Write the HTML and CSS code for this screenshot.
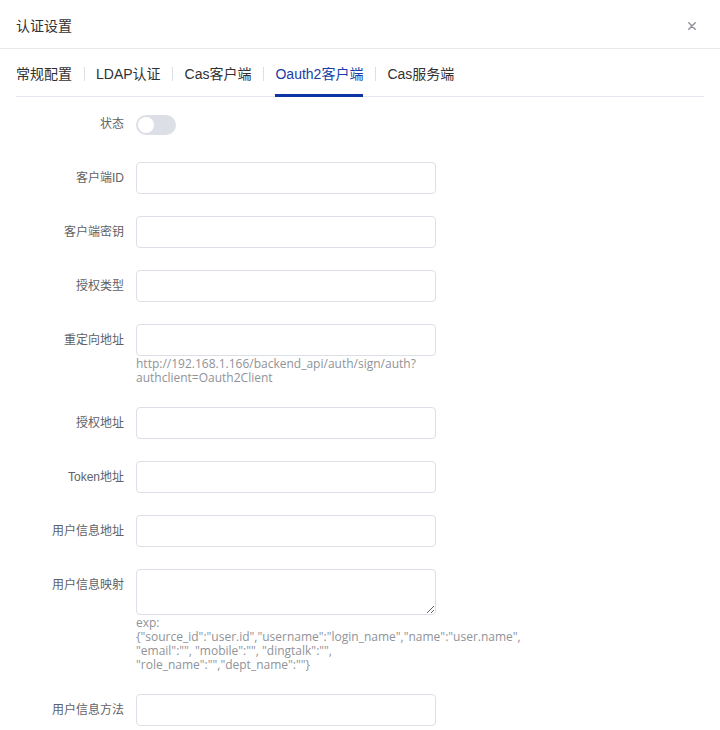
FILE: index.html
```html
<!DOCTYPE html>
<html lang="zh-CN">
<head>
<meta charset="utf-8">
<title>认证设置</title>
<link rel="stylesheet" href="styles.css">
</head>
<body>
<div class="dialog">
  <header class="dlg-header">
    <span class="dlg-title">认证设置</span>
    <button class="dlg-close" type="button" aria-label="关闭">
      <svg width="8" height="8" viewBox="0 0 8 8"><path d="M0.8 0.8L7.2 7.2M7.2 0.8L0.8 7.2" stroke="#909399" stroke-width="1.5" stroke-linecap="round" fill="none"/></svg>
    </button>
  </header>
  <div class="dlg-body">
    <nav class="tabs">
      <span class="tab">常规配置</span><span class="tab-sep"></span>
      <span class="tab">LDAP认证</span><span class="tab-sep"></span>
      <span class="tab">Cas客户端</span><span class="tab-sep"></span>
      <span class="tab active">Oauth2客户端</span><span class="tab-sep"></span>
      <span class="tab">Cas服务端</span>
    </nav>
    <form class="form">
      <div class="form-item">
        <label class="form-label">状态</label>
        <div class="form-content"><span class="switch"><span class="switch-knob"></span></span></div>
      </div>
      <div class="form-item">
        <label class="form-label">客户端ID</label>
        <div class="form-content"><input class="input" type="text"></div>
      </div>
      <div class="form-item">
        <label class="form-label">客户端密钥</label>
        <div class="form-content"><input class="input" type="text"></div>
      </div>
      <div class="form-item">
        <label class="form-label">授权类型</label>
        <div class="form-content"><input class="input" type="text"></div>
      </div>
      <div class="form-item">
        <label class="form-label">重定向地址</label>
        <div class="form-content">
          <input class="input" type="text">
          <div class="help">http://192.168.1.166/backend_api/auth/sign/auth?<br>authclient=Oauth2Client</div>
        </div>
      </div>
      <div class="form-item">
        <label class="form-label">授权地址</label>
        <div class="form-content"><input class="input" type="text"></div>
      </div>
      <div class="form-item">
        <label class="form-label">Token地址</label>
        <div class="form-content"><input class="input" type="text"></div>
      </div>
      <div class="form-item">
        <label class="form-label">用户信息地址</label>
        <div class="form-content"><input class="input" type="text"></div>
      </div>
      <div class="form-item">
        <label class="form-label">用户信息映射</label>
        <div class="form-content">
          <textarea class="textarea"></textarea>
          <div class="help">exp:<br>{"source_id":"user.id","username":"login_name","name":"user.name",<br>"email":"", "mobile":"", "dingtalk":"",<br>"role_name":"","dept_name":""}</div>
        </div>
      </div>
      <div class="form-item">
        <label class="form-label">用户信息方法</label>
        <div class="form-content"><input class="input" type="text"></div>
      </div>
    </form>
  </div>
</div>
</body>
</html>
```
FILE: styles.css
```css
html, body {
  margin: 0;
  padding: 0;
  background: #ffffff;
}
body {
  font-family: "Liberation Sans", "Noto Sans CJK SC", sans-serif;
  color: #303133;
}
.dialog {
  width: 720px;
  height: 730px;
  overflow: hidden;
  background: #fff;
}
.dlg-header {
  display: flex;
  align-items: center;
  justify-content: space-between;
  box-sizing: border-box;
  height: 49px;
  padding: 4px 24px 0 16px;
  border-bottom: 1px solid #e8eaee;
}
.dlg-title {
  font-size: 14px;
  line-height: 16px;
  color: #303133;
}
.dlg-close {
  border: 0;
  background: none;
  padding: 0;
  width: 8px;
  height: 8px;
  display: flex;
  cursor: pointer;
}
.dlg-body {
  padding: 0 16px;
}
.tabs {
  display: flex;
  align-items: center;
  padding: 14px 0 11px;
  border-bottom: 1px solid #e4e7ed;
}
.tab {
  position: relative;
  font-size: 14px;
  line-height: 22px;
  color: #303133;
  white-space: nowrap;
}
.tab.active {
  color: #1a3da6;
}
.tab.active::after {
  content: "";
  position: absolute;
  left: 0;
  right: 0;
  bottom: -12px;
  height: 3px;
  background: #0b34a5;
}
.tab-sep {
  width: 1px;
  height: 14px;
  background: #dcdfe6;
  margin: 0 11.5px;
}
.form {
  margin-top: 11px;
}
.form-item {
  display: flex;
  margin-bottom: 22px;
}
.form-label {
  width: 120px;
  flex: none;
  box-sizing: border-box;
  padding-right: 12px;
  text-align: right;
  font-size: 12px;
  line-height: 32px;
  color: #606266;
}
.form-content {
  display: flex;
  flex-direction: column;
  align-items: flex-start;
  min-height: 32px;
}
.switch {
  position: relative;
  display: block;
  width: 40px;
  height: 20px;
  margin-top: 7px;
  border-radius: 10px;
  background: #dcdfe6;
}
.switch-knob {
  position: absolute;
  left: 2px;
  top: 2px;
  width: 16px;
  height: 16px;
  border-radius: 50%;
  background: #fff;
}
.input {
  display: block;
  width: 300px;
  height: 32px;
  box-sizing: border-box;
  margin: 0;
  border: 1px solid #dcdfe6;
  border-radius: 4px;
  background: #fff;
  padding: 0 12px;
  font: inherit;
  font-size: 12px;
  outline: none;
}
.textarea {
  display: block;
  width: 300px;
  height: 46px;
  box-sizing: border-box;
  margin: 0;
  border: 1px solid #dcdfe6;
  border-radius: 4px;
  padding: 5px 12px;
  font: inherit;
  font-size: 12px;
  resize: vertical;
  outline: none;
}
.help {
  margin-top: 1px;
  font-family: "Open Sans", "Noto Sans CJK SC", sans-serif;
  font-size: 12px;
  line-height: 14px;
  color: #909399;
  white-space: nowrap;
}
```
